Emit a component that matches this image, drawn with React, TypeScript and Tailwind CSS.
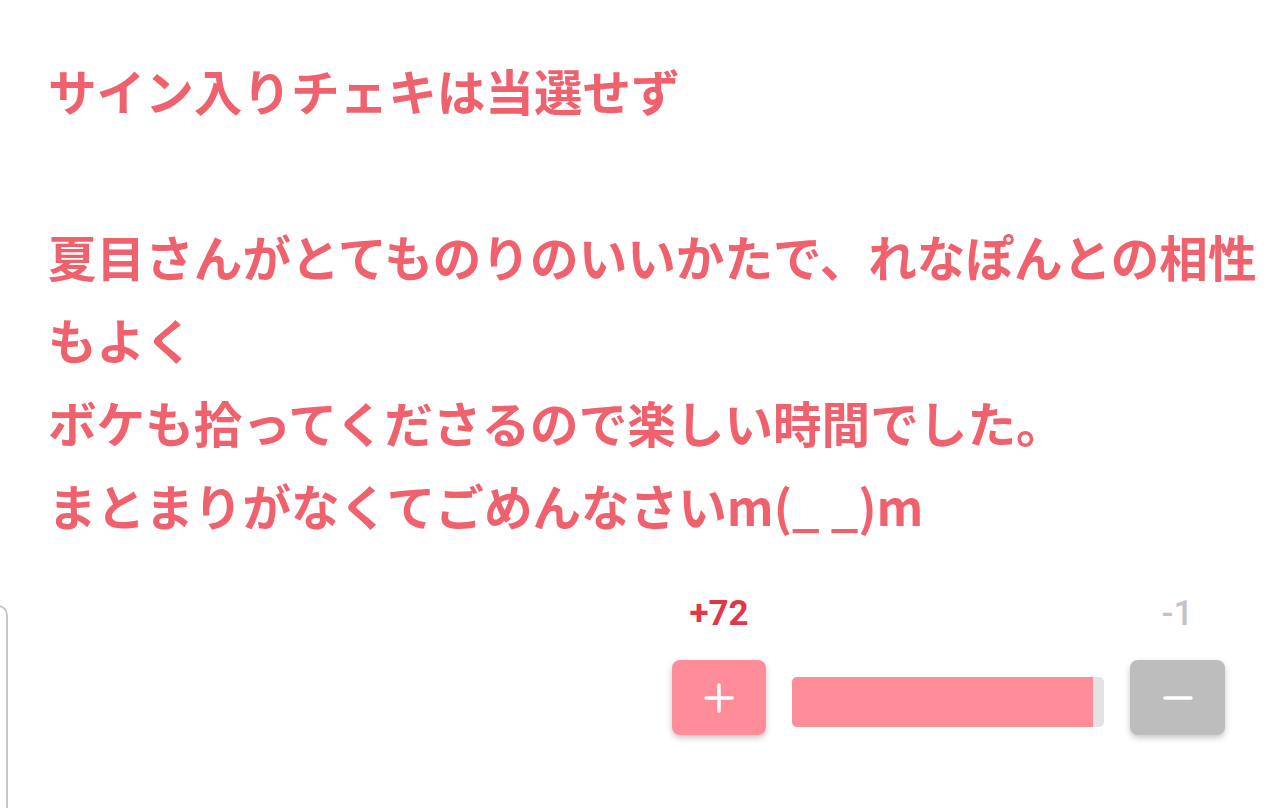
import React from "react";

const font = { fontFamily: '"Noto Sans CJK JP", "Noto Sans", sans-serif' };
const numFont = { fontFamily: 'Roboto, "Noto Sans", sans-serif' };

export default function App() {
  return (
    <div className="relative w-[1280px] h-[808px] overflow-hidden bg-white" style={font}>
      <div className="pl-[48px] pt-[49px] w-[1260px] text-[48.6px] leading-[83px] font-bold text-[#f0616e]">
        <p>サイン入りチェキは当選せず</p>
        <p>&nbsp;</p>
        <p>夏目さんがとてものりのいいかたで、れなぽんとの相性もよく</p>
        <p>ボケも拾ってくださるので楽しい時間でした。</p>
        <p>まとまりがなくてごめんなさいm(_ _)m</p>
      </div>

      <div className="flex justify-end pr-[55px] mt-[47px]">
        <div className="grid grid-cols-[94px_312px_95px] gap-x-[26px]">
          <div className="text-center text-[35px] leading-[40px] font-bold text-[#e2364a]" style={numFont}>+72</div>
          <div />
          <div className="text-center text-[35px] leading-[40px] font-medium text-[#c4c4c4]" style={numFont}>-1</div>
          <button className="mt-[26px] h-[75px] rounded-[8px] bg-[#ff8d99] shadow-[0_3px_6px_rgba(0,0,0,0.22)] flex items-center justify-center">
            <svg width="32" height="32" viewBox="0 0 32 32">
              <path d="M16 3v26M3 16h26" stroke="white" strokeWidth="3.5" strokeLinecap="round" />
            </svg>
          </button>
          <div className="mt-[43px] h-[50px] rounded-[5px] bg-[#e3e3e3] overflow-hidden flex">
            <div className="h-full w-[301px] bg-[#ff8d99]" />
          </div>
          <button className="mt-[26px] h-[75px] rounded-[8px] bg-[#bdbdbd] shadow-[0_3px_6px_rgba(0,0,0,0.22)] flex items-center justify-center">
            <svg width="32" height="32" viewBox="0 0 32 32">
              <path d="M3 16h26" stroke="white" strokeWidth="3.5" strokeLinecap="round" />
            </svg>
          </button>
        </div>
      </div>

      <div className="absolute left-[-100px] top-[605px] w-[108px] h-[300px] rounded-[10px] border-2 border-[#c8c8c8] bg-white" />
    </div>
  );
}
